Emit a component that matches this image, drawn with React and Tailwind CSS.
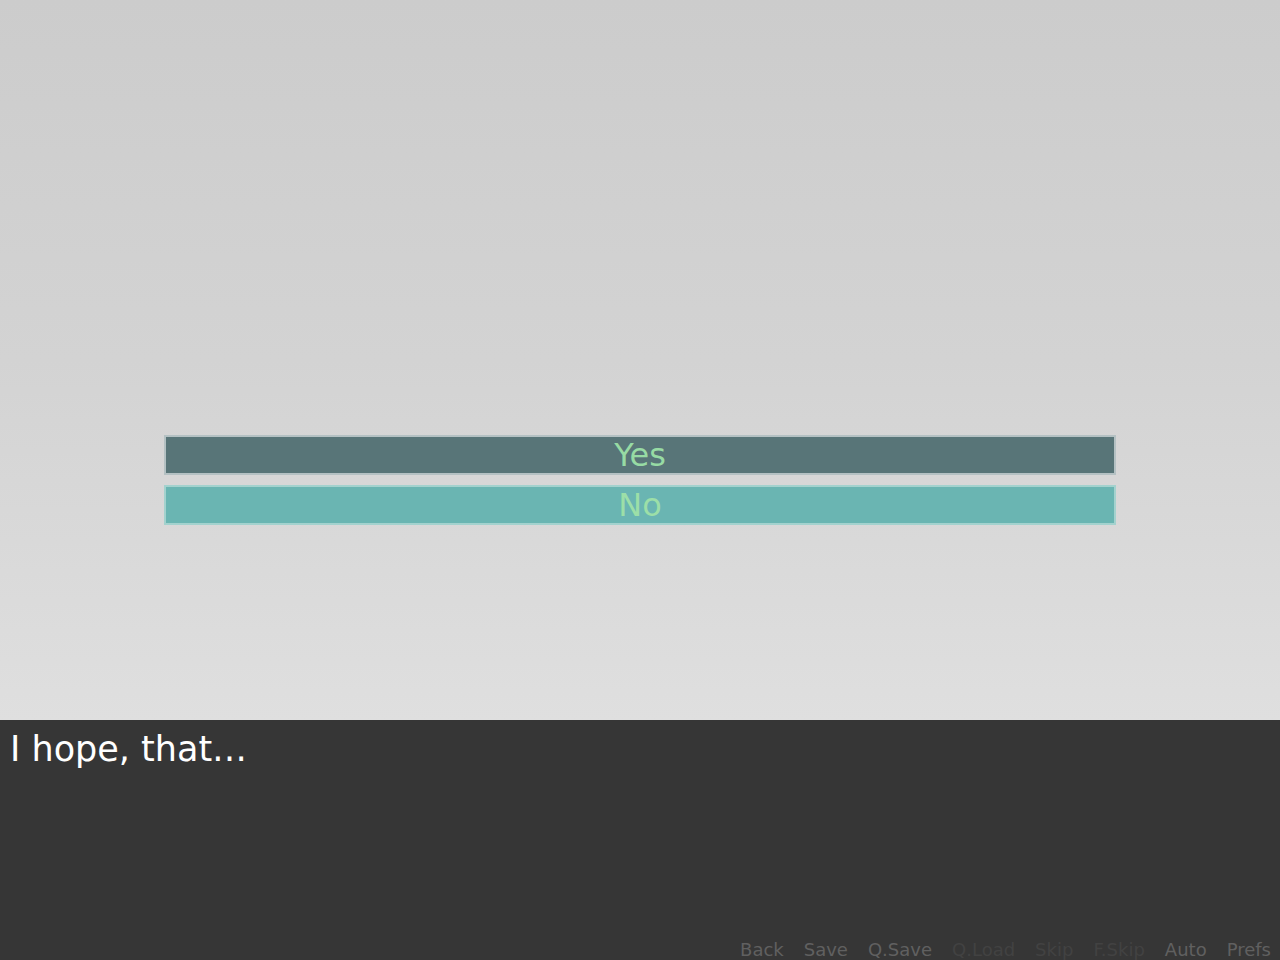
export default function App() {
  const font = { fontFamily: '"DejaVu Sans", sans-serif' };
  const items = [
    { t: "Back", on: true },
    { t: "Save", on: true },
    { t: "Q.Save", on: true },
    { t: "Q.Load", on: false },
    { t: "Skip", on: false },
    { t: "F.Skip", on: false },
    { t: "Auto", on: true },
    { t: "Prefs", on: true },
  ];
  return (
    <div className="w-[1280px] h-[960px] flex flex-col overflow-hidden" style={font}>
      <div className="h-[720px] bg-gradient-to-b from-[#cccccc] via-[#d3d3d3] to-[#dfdfdf] flex flex-col items-center pt-[435px] gap-[10px]">
        <div className="w-[952px] h-[40px] border-2 border-[#b4c1c3] bg-[#587578] flex items-center justify-center text-[32px] leading-none text-[#97dba4]">
          Yes
        </div>
        <div className="w-[952px] h-[40px] border-2 border-[#a3d2ce] bg-[#6ab5b2] flex items-center justify-center text-[32px] leading-none text-[#9cdfa8]">
          No
        </div>
      </div>
      <div className="h-[240px] bg-[#363636] flex flex-col">
        <div className="pl-[10px] pt-[9px] text-[35px] leading-[1.164] text-white">I hope, that…</div>
        <div className="mt-auto flex justify-end gap-[20px] pr-[9px] text-[18px] leading-[21px]">
          {items.map((it) => (
            <span key={it.t} className={it.on ? "text-[#606060]" : "text-[#424242]"}>
              {it.t}
            </span>
          ))}
        </div>
      </div>
    </div>
  );
}
